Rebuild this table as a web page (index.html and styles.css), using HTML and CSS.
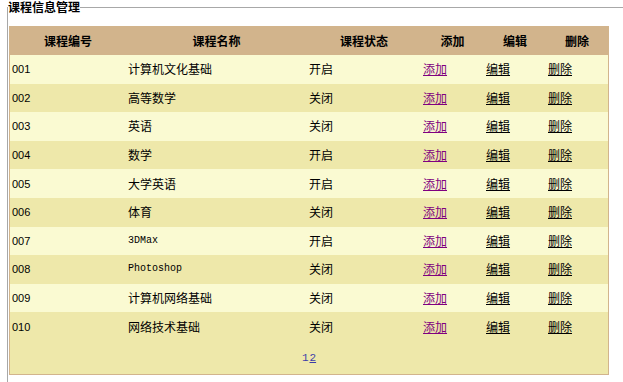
FILE: index.html
```html
<!DOCTYPE html>
<html>
<head>
<meta charset="utf-8">
<link rel="stylesheet" href="styles.css">
</head>
<body>
<fieldset class="box">
<legend class="title">课程信息管理</legend>
<table class="grid">
<colgroup><col class="c1"><col class="c2"><col class="c3"><col class="c4"><col class="c5"><col class="c6"></colgroup>
<thead>
<tr class="head"><th>课程编号</th><th>课程名称</th><th>课程状态</th><th>添加</th><th>编辑</th><th>删除</th></tr>
</thead>
<tbody>
<tr class="odd"><td class="num">001</td><td>计算机文化基础</td><td>开启</td><td><a class="visited" href="#">添加</a></td><td><a href="#">编辑</a></td><td><a href="#">删除</a></td></tr>
<tr class="even"><td class="num">002</td><td>高等数学</td><td>关闭</td><td><a class="visited" href="#">添加</a></td><td><a href="#">编辑</a></td><td><a href="#">删除</a></td></tr>
<tr class="odd"><td class="num">003</td><td>英语</td><td>关闭</td><td><a class="visited" href="#">添加</a></td><td><a href="#">编辑</a></td><td><a href="#">删除</a></td></tr>
<tr class="even"><td class="num">004</td><td>数学</td><td>开启</td><td><a class="visited" href="#">添加</a></td><td><a href="#">编辑</a></td><td><a href="#">删除</a></td></tr>
<tr class="odd"><td class="num">005</td><td>大学英语</td><td>开启</td><td><a class="visited" href="#">添加</a></td><td><a href="#">编辑</a></td><td><a href="#">删除</a></td></tr>
<tr class="even"><td class="num">006</td><td>体育</td><td>关闭</td><td><a class="visited" href="#">添加</a></td><td><a href="#">编辑</a></td><td><a href="#">删除</a></td></tr>
<tr class="odd"><td class="num">007</td><td class="mono">3DMax</td><td>开启</td><td><a class="visited" href="#">添加</a></td><td><a href="#">编辑</a></td><td><a href="#">删除</a></td></tr>
<tr class="even"><td class="num">008</td><td class="mono">Photoshop</td><td>关闭</td><td><a class="visited" href="#">添加</a></td><td><a href="#">编辑</a></td><td><a href="#">删除</a></td></tr>
<tr class="odd"><td class="num">009</td><td>计算机网络基础</td><td>关闭</td><td><a class="visited" href="#">添加</a></td><td><a href="#">编辑</a></td><td><a href="#">删除</a></td></tr>
<tr class="even"><td class="num">010</td><td>网络技术基础</td><td>关闭</td><td><a class="visited" href="#">添加</a></td><td><a href="#">编辑</a></td><td><a href="#">删除</a></td></tr>
<tr class="pager"><td colspan="6"><span class="pg">1</span><a class="pg link" href="#">2</a></td></tr>
</tbody>
</table>
</fieldset>
</body>
</html>
```
FILE: styles.css
```css
html, body {
  margin: 0;
  padding: 0;
  overflow: hidden;
  background: #fff;
}
body {
  font-family: "Liberation Sans", "Noto Sans CJK SC", sans-serif;
  font-size: 12px;
  color: #000;
  padding-top: 1px;
}
.box {
  box-sizing: border-box;
  height: 381px;
  margin: 0 0 0 7px;
  padding: 0 0 0 1px;
  border: 0;
  border-top: 1px solid #a8a8a8;
  border-left: 1px solid #a8a8a8;
}
.title {
  margin-left: -1px;
  padding: 0;
  font-weight: bold;
  font-size: 12px;
  line-height: 12px;
  font-family: "Noto Sans CJK SC", sans-serif;
}
.grid {
  margin-top: 13px;
  width: 600px;
  table-layout: fixed;
  border-collapse: separate;
  border-spacing: 0;
  border: 1px solid #d2b48c;
}
.c1 { width: 116px; }
.c2 { width: 181px; }
.c3 { width: 114px; }
.c4 { width: 63px; }
.c5 { width: 62px; }
.c6 { width: 62px; }
.head th {
  background: #d2b48c;
  height: 28px;
  padding: 0;
  font-weight: bold;
  text-align: center;
  font-family: "Noto Sans CJK SC", sans-serif;
  line-height: 14px;
}
.grid td {
  padding: 0 0 0 2px;
  height: 28.6px;
  line-height: 14px;
  vertical-align: middle;
  font-family: "Noto Sans CJK SC", sans-serif;
}
.odd td { background: #fafad2; }
.even td { background: #eee8aa; }
.grid td.num {
  font-family: "Liberation Sans", sans-serif;
  font-size: 11px;
}
.grid td.mono {
  font-family: "Liberation Mono", monospace;
  font-size: 10px;
}
.grid a {
  color: #000;
  text-decoration: underline;
}
.grid a.visited {
  color: #800080;
}
.pager td {
  background: #eee8aa;
  height: 33px;
  text-align: center;
  padding: 0;
}
.pg {
  font-family: "Liberation Mono", monospace;
  font-size: 11px;
  color: #3c3ca8;
}
.grid a.link {
  color: #3c3ca8;
  margin-left: 1px;
}
```
